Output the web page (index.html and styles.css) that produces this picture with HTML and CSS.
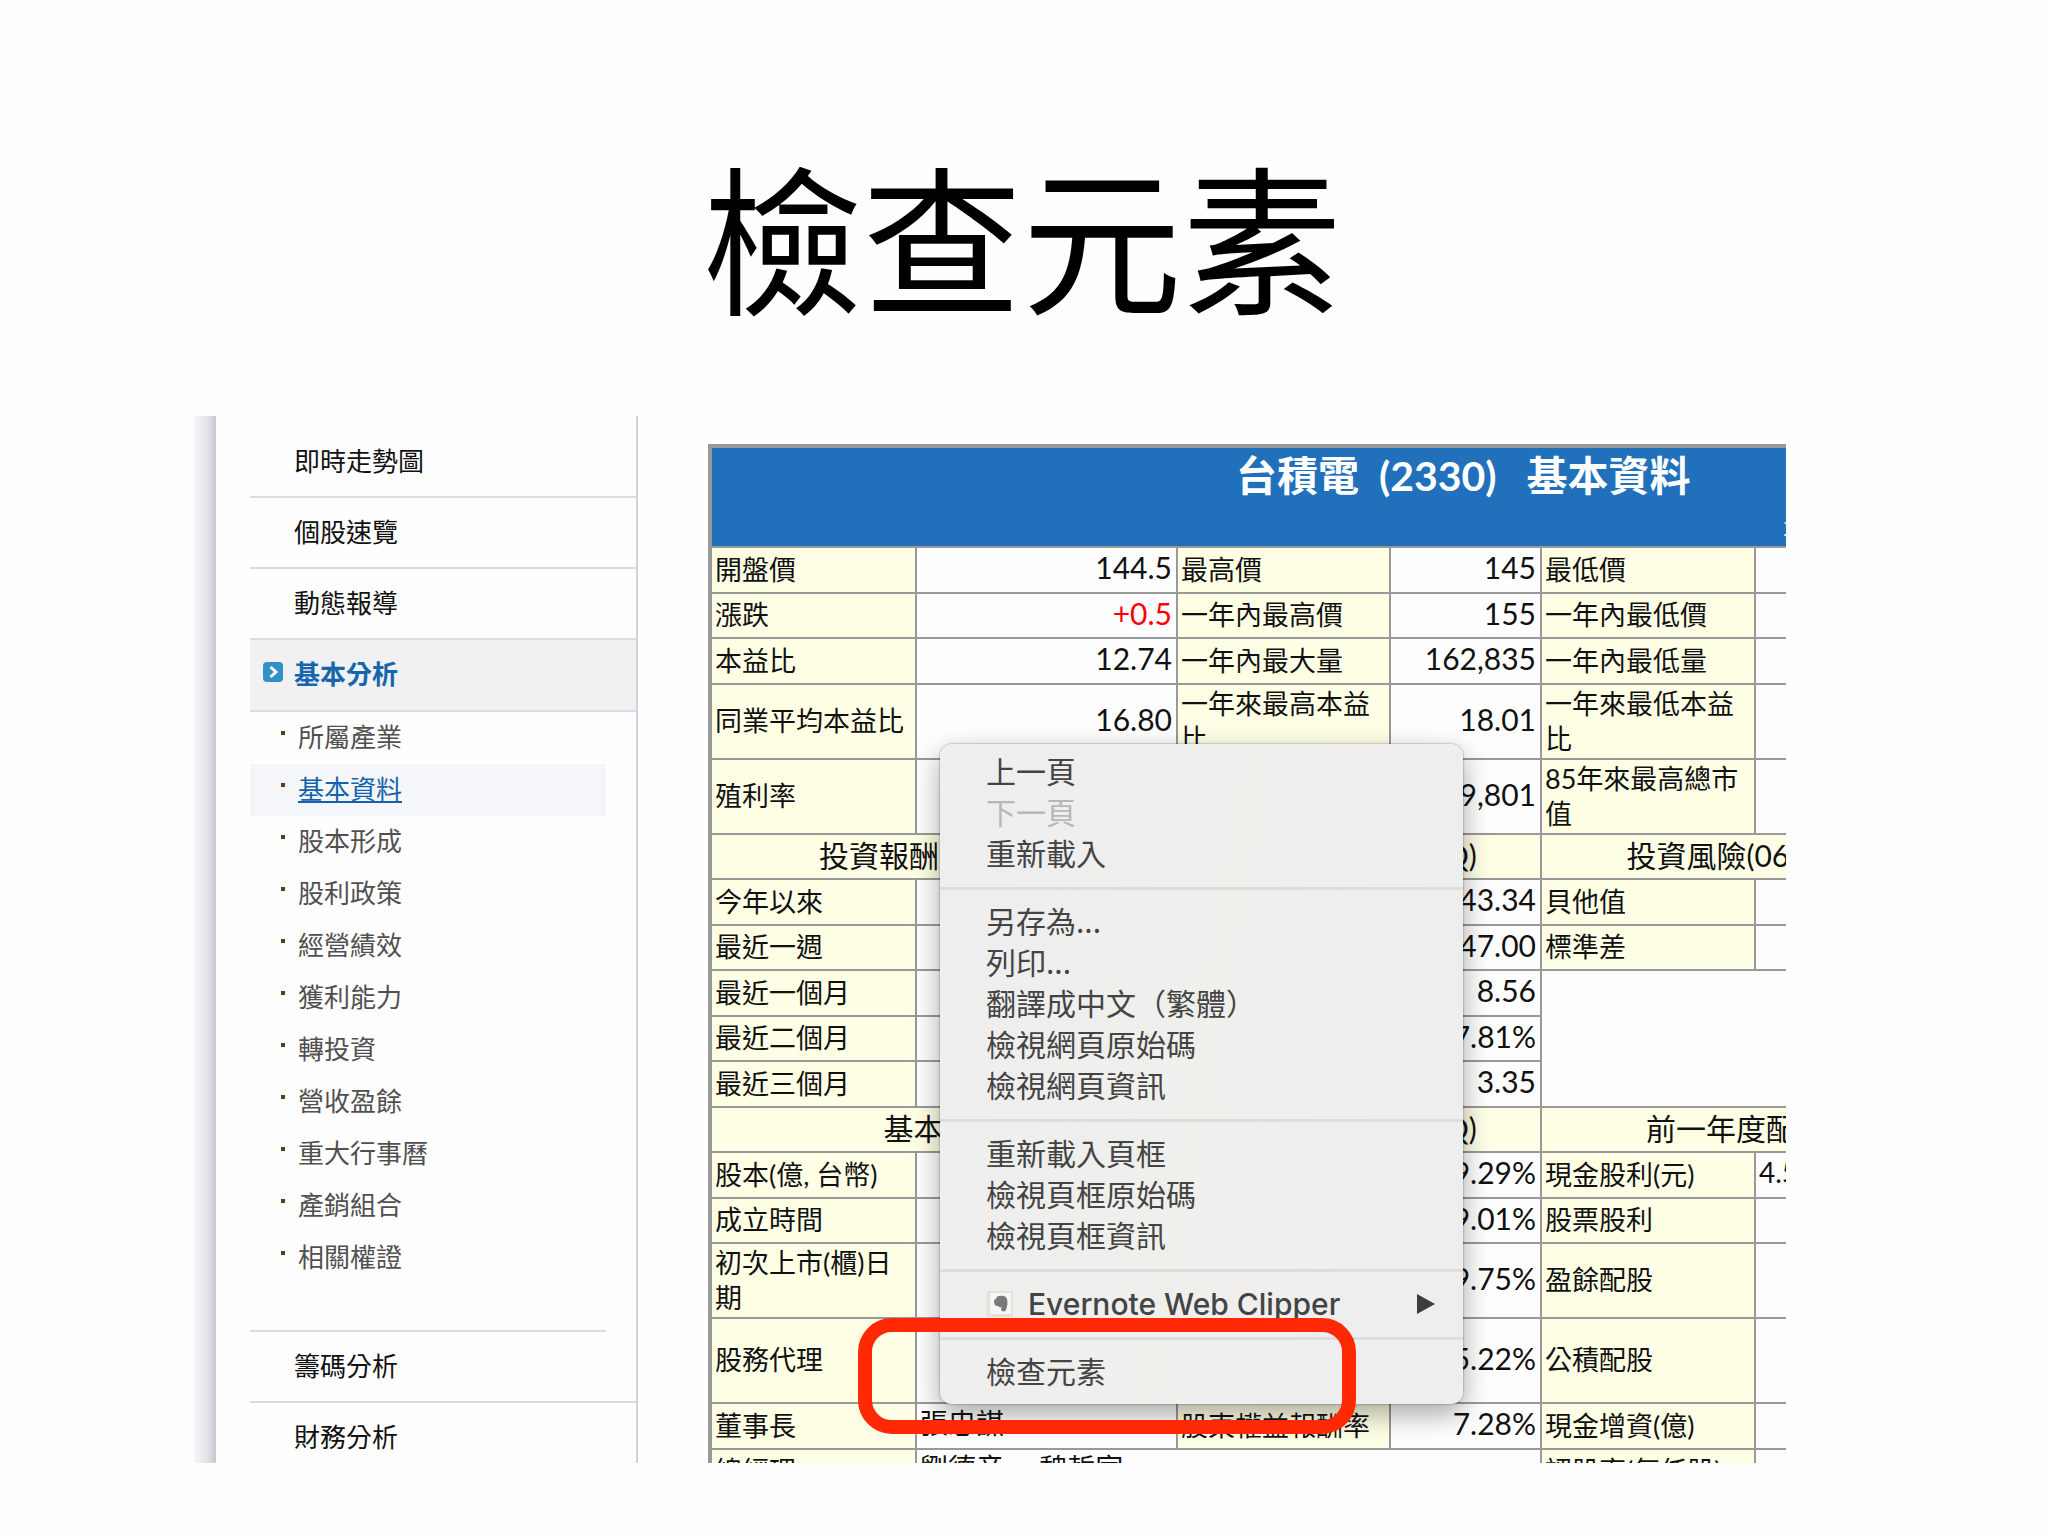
FILE: index.html
```html
<!DOCTYPE html>
<html lang="zh-Hant">
<head>
    <meta charset="UTF-8">
    <meta name="viewport" content="width=device-width, initial-scale=1.0">
    <title>檢查元素</title>
    <link rel="stylesheet" href="styles.css">
</head>
<body>
    <h1>檢查元素</h1>
    <main class="shot">
        <div class="edge"></div>
        <nav class="sidebar">
            <ul class="menu">
                <li><a href="#">即時走勢圖</a></li>
                <li><a href="#">個股速覽</a></li>
                <li><a href="#">動態報導</a></li>
                <li class="open">
                    <svg class="arrow" viewBox="0 0 20 20" width="20" height="20"><rect width="20" height="20" rx="4" fill="#3291c2"/><path d="M7.5 5l5.5 5-5.5 5" fill="none" stroke="#fff" stroke-width="3"/></svg>
                    <a href="#">基本分析</a>
                </li>
            </ul>
            <ul class="submenu">
                <li><a href="#">所屬產業</a></li>
                <li class="current"><a href="#">基本資料</a></li>
                <li><a href="#">股本形成</a></li>
                <li><a href="#">股利政策</a></li>
                <li><a href="#">經營績效</a></li>
                <li><a href="#">獲利能力</a></li>
                <li><a href="#">轉投資</a></li>
                <li><a href="#">營收盈餘</a></li>
                <li><a href="#">重大行事曆</a></li>
                <li><a href="#">產銷組合</a></li>
                <li><a href="#">相關權證</a></li>
            </ul>
            <ul class="menu">
                <li><a href="#">籌碼分析</a></li>
                <li><a href="#">財務分析</a></li>
            </ul>
        </nav>
        <div class="content">
            <table>
                <colgroup>
                    <col class="c1"><col class="c2"><col class="c3"><col class="c4"><col class="c5"><col class="c6">
                </colgroup>
                <thead>
                    <tr>
                        <th colspan="6">
                            <div class="stock">台積電&nbsp; (2330)&nbsp;&nbsp; 基本資料</div>
                            <div class="date">最近交易日</div>
                        </th>
                    </tr>
                </thead>
                <tbody>
                    <tr><th>開盤價</th><td>144.5</td><th>最高價</th><td>145</td><th>最低價</th><td></td></tr>
                    <tr><th>漲跌</th><td class="up">+0.5</td><th>一年內最高價</th><td>155</td><th>一年內最低價</th><td></td></tr>
                    <tr><th>本益比</th><td>12.74</td><th>一年內最大量</th><td>162,835</td><th>一年內最低量</th><td></td></tr>
                    <tr class="two"><th>同業平均本益比</th><td>16.80</td><th>一年來最高本益比</th><td>18.01</td><th>一年來最低本益比</th><td></td></tr>
                    <tr class="two"><th>殖利率</th><td></td><th></th><td>9,801</td><th>85年來最高總市值</th><td></td></tr>
                    <tr class="section"><th colspan="2">投資報酬率(07/07)</th><th colspan="2">財務比例(106.1Q)</th><th colspan="2">投資風險(06/30)</th></tr>
                    <tr><th>今年以來</th><td></td><th></th><td>43.34</td><th>貝他值</th><td></td></tr>
                    <tr><th>最近一週</th><td></td><th></th><td>47.00</td><th>標準差</th><td></td></tr>
                    <tr><th>最近一個月</th><td></td><th></th><td>8.56</td><td class="blank" colspan="2" rowspan="3"></td></tr>
                    <tr><th>最近二個月</th><td></td><th></th><td>7.81%</td></tr>
                    <tr><th>最近三個月</th><td></td><th></th><td>3.35</td></tr>
                    <tr class="section"><th colspan="2">基本資料</th><th colspan="2">獲利能力(106.1Q)</th><th colspan="2">前一年度配股</th></tr>
                    <tr><th>股本(億, 台幣)</th><td></td><th></th><td>9.29%</td><th>現金股利(元)</th><td class="left">4.50</td></tr>
                    <tr><th>成立時間</th><td></td><th></th><td>9.01%</td><th>股票股利</th><td></td></tr>
                    <tr class="two"><th>初次上市(櫃)日期</th><td></td><th></th><td>9.75%</td><th>盈餘配股</th><td></td></tr>
                    <tr class="tall"><th>股務代理</th><td></td><th></th><td>5.22%</td><th>公積配股</th><td></td></tr>
                    <tr><th>董事長</th><td class="left">張忠謀</td><th>股東權益報酬率</th><td>7.28%</td><th>現金增資(億)</th><td></td></tr>
                    <tr><th>總經理</th><td class="left" colspan="3">劉德音、 魏哲家</td><th>認股率(每仟股)</th><td></td></tr>
                </tbody>
            </table>
        </div>

        <div class="context-menu">
            <button>上一頁</button>
            <button disabled>下一頁</button>
            <button>重新載入</button>
            <hr>
            <button>另存為...</button>
            <button>列印...</button>
            <button>翻譯成中文（繁體）</button>
            <button>檢視網頁原始碼</button>
            <button>檢視網頁資訊</button>
            <hr>
            <button>重新載入頁框</button>
            <button>檢視頁框原始碼</button>
            <button>檢視頁框資訊</button>
            <hr>
            <button class="clipper">
                <svg viewBox="0 0 28 28" width="28" height="28"><rect x="1" y="1" width="26" height="26" fill="#dfe3da"/><rect x="4" y="3" width="21" height="21" fill="#f6f7f3"/><path d="M8 11c0-1 1-2 2-2 0-1 1-3 3-3 4-1 7 0 8 3 1 4 0 8-1 11-1 2-5 2-5-1 0-1 1-2 2-2-2 1-4 0-5-1-3 0-4-2-4-5z" fill="#777c78"/></svg>
                Evernote Web Clipper
                <svg class="more" viewBox="0 0 18 22" width="18" height="22"><path d="M0 1l18 10L0 21z" fill="#3c3c3c"/></svg>
            </button>
            <hr>
            <button>檢查元素</button>
        </div>
        <div class="highlight"></div>
    </main>
</body>
</html>
```
FILE: styles.css
```css
* {
    box-sizing: border-box;
}
body {
    font-family: "Noto Sans CJK TC", sans-serif;
    display: flex;
    flex-direction: column;
    height: 100vh;
    margin: 0;
    padding: 0 262px 73px 194px;
    background: #fefefe;
    color: #111;
}
h1 {
    margin: 0 0 0 64px;
    padding-top: 143px;
    height: 416px;
    flex: none;
    font-size: 160px;
    font-weight: 400;
    line-height: 180px;
    text-align: center;
    color: #000;
}
.shot {
    flex: 1;
    display: flex;
    min-height: 0;
    position: relative;
    overflow: hidden;
}
.edge {
    width: 22px;
    flex: none;
    background: linear-gradient(to right, #f6f6f9, #e6e6ea 55%, #c6c6ce);
}

/* sidebar */
.sidebar {
    width: 422px;
    flex: none;
    margin-right: 70px;
    padding: 11px 0 0 34px;
    border-right: 2px solid #d2d2d6;
}
ul {
    list-style: none;
    margin: 0;
    padding: 0;
}
li {
    display: flex;
    align-items: center;
    font-size: 26px;
    line-height: 36px;
    padding-bottom: 4px;
}
a {
    color: inherit;
    text-decoration: none;
}
.menu li {
    height: 71px;
    padding-left: 44px;
    border-bottom: 2px solid #dcdce0;
    position: relative;
}
.menu .open {
    height: 72px;
    background: #f1f1f3;
    color: #1566ad;
    font-weight: 700;
}
.arrow {
    position: absolute;
    left: 13px;
    top: 22px;
}
.submenu {
    margin-right: 30px;
    padding-bottom: 46px;
    border-bottom: 2px solid #dcdce0;
}
.submenu li {
    height: 52px;
    padding-left: 31px;
    color: #505050;
}
.submenu li:before {
    content: "";
    width: 4px;
    height: 4px;
    margin: 0 13px 6px 0;
    background: #5b3a1a;
}
.submenu .current {
    background: #f5f6f9;
    color: #1263ab;
}
.current a {
    text-decoration: underline;
}

/* stock table */
.content {
    flex: 1;
    min-width: 0;
    padding-top: 28px;
    overflow: hidden;
}
table {
    width: 1227px;
    table-layout: fixed;
    border-collapse: collapse;
    border: 4px solid #999;
    font-family: Lato, "Noto Sans CJK TC", sans-serif;
    line-height: 35px;
}
.c1 { width: 206px; }
.c2 { width: 261px; }
.c3 { width: 213px; }
.c4 { width: 151px; }
.c5 { width: 214px; }
.c6 { width: 178px; }
th, td {
    height: 45px;
    padding: 0 4px 2px 3px;
    border: 2px solid #999;
}
tbody tr:nth-child(odd) th {
    height: 46px;
}
th {
    font-size: 27px;
    font-weight: 400;
    text-align: left;
    background: #ffffe6;
}
td {
    padding-bottom: 5px;
    font-size: 30px;
    text-align: right;
    background: #fefefe;
}
td.left {
    font-size: 28px;
    text-align: left;
}
.up {
    color: #f00;
}
tbody tr.two th {
    height: 75px;
}
tbody tr.tall th {
    height: 85px;
}
tbody .section th {
    padding-bottom: 3px;
    font-size: 30px;
    text-align: center;
}
thead th {
    height: 100px;
    padding: 0;
    background: #2170bb;
    color: #fff;
    vertical-align: top;
}
.stock {
    padding-left: 524px;
    font-size: 41px;
    font-weight: 700;
    line-height: 56px;
}
.date {
    padding-left: 1071px;
    line-height: 42px;
}

/* right-click menu */
.context-menu {
    position: absolute;
    left: 746px;
    top: 328px;
    width: 523px;
    padding: 8px 0 11px;
    border-radius: 12px;
    background: linear-gradient(100deg, #eeeef0, #efefec 50%, #efeeee 80%);
    box-shadow: 0 0 2px rgba(0,0,0,0.5), 0 10px 28px rgba(0,0,0,0.35);
}
.context-menu button {
    display: flex;
    align-items: center;
    width: 100%;
    height: 41px;
    padding: 0 28px 5px 46px;
    border: 0;
    background: none;
    font-family: "Noto Sans CJK TC", sans-serif;
    font-size: 30px;
    color: #444;
}
.context-menu button:disabled {
    color: #b8b8b8;
}
.context-menu .clipper {
    gap: 14px;
    padding-bottom: 2px;
    font-family: Inter, "Liberation Sans", sans-serif;
    font-weight: 500;
}
.more {
    margin-left: auto;
}
hr {
    margin: 12px 0;
    border: 0;
    height: 3px;
    background: #dddddf;
}
.highlight {
    position: absolute;
    left: 664px;
    top: 902px;
    width: 498px;
    height: 116px;
    border: 14px solid #ff2a05;
    border-radius: 34px;
}
```
